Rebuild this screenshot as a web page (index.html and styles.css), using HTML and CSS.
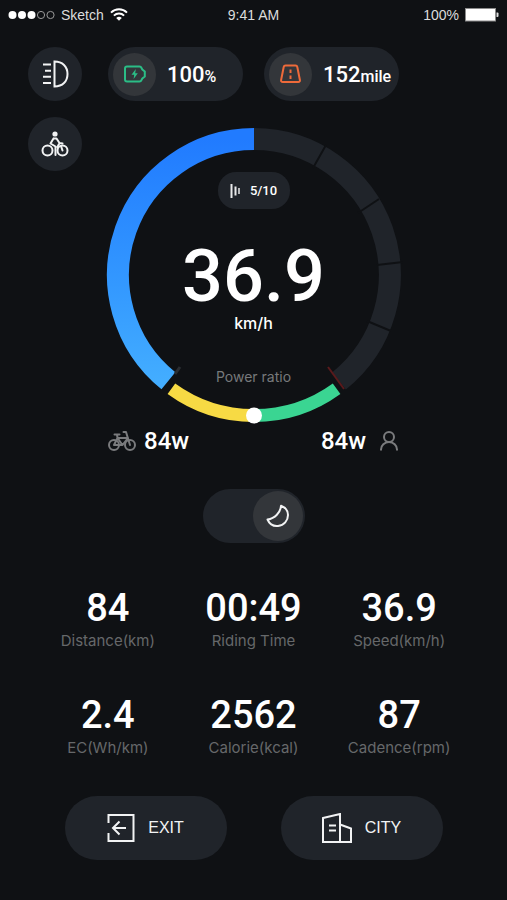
FILE: index.html
```html
<!DOCTYPE html>
<html lang="en">
<head>
    <meta charset="UTF-8">
    <meta name="viewport" content="width=device-width, initial-scale=1.0">
    <title>Ride</title>
    <link rel="stylesheet" href="styles.css">
</head>
<body>
    <header class="status-bar">
        <div class="carrier">
            <svg width="47" height="10" viewBox="0 0 47 10">
                <g fill="#fff"><circle cx="4.5" cy="5" r="4"/><circle cx="14" cy="5" r="4"/><circle cx="23.5" cy="5" r="4"/></g>
                <g fill="none" stroke="#999" stroke-width="1"><circle cx="33" cy="5" r="3.6"/><circle cx="42.5" cy="5" r="3.6"/></g>
            </svg>
            <span>Sketch</span>
            <svg class="wifi" width="18" height="13" viewBox="0 0 18 13" fill="none" stroke="#fff" stroke-width="2">
                <path d="M1 4.6a11.5 11.5 0 0 1 16 0M3.9 7.6a7.4 7.4 0 0 1 10.2 0"/>
                <path d="M9 12.8 6.2 10a4 4 0 0 1 5.6 0z" fill="#fff" stroke="none"/>
            </svg>
        </div>
        <span>9:41 AM</span>
        <div class="battery">
            <span>100%</span>
            <svg width="34" height="14" viewBox="0 0 34 14">
                <rect x=".5" y=".5" width="30" height="12.5" fill="#fff" stroke="#8b8b8b"/>
                <path d="M31.5 4.5h1q1 0 1 1v2.500q0 1-1 1h-1z" fill="#ddd"/>
            </svg>
        </div>
    </header>

    <main>
        <section class="dashboard">
            <button class="round-btn light-btn" aria-label="Headlight">
                <svg width="28" height="28" viewBox="0 0 28 28" fill="none" stroke="#f2f3f4" stroke-width="2">
                    <path d="M13.500 1.500v25c8 0 13-5 13-12.500s-5-12.500-13-12.500z"/>
                    <path d="M2 4.500h8M4 10.800h6M2 16.800h8M2 23h8"/>
                </svg>
            </button>

            <div class="pills">
                <div class="pill">
                    <span class="pill-icon">
                        <svg width="24" height="20" viewBox="0 0 24 20" fill="none" stroke="#2bbd86" stroke-width="2" stroke-linejoin="round">
                            <path d="M4 2.500h12.500q1.500 0 2 1.500l.8 1.500 2.500 2v5l-2.500 2-.8 1.500q-.5 1.500-2 1.500H4q-2 0-2-2v-11q0-2 2-2z"/>
                            <path d="M12.800 5 8.500 10.800h2.700L10.600 15l4.200-5.800h-2.600z" fill="#2bbd86" stroke="none"/>
                        </svg>
                    </span>
                    <span class="pill-value">100<small>%</small></span>
                </div>
                <div class="pill">
                    <span class="pill-icon">
                        <svg width="22" height="20" viewBox="0 0 22 20" fill="none" stroke="#ee6a3a" stroke-width="2" stroke-linejoin="round">
                            <path d="M5.500 1.500h10q1.500 0 1.800 1.500l2.600 13q.2 2-1.600 2H2.700q-1.800 0-1.600-2L3.700 3q.3-1.500 1.800-1.500z"/>
                            <path d="M10.500 5.500v3.500M10.500 11.500V15"/>
                        </svg>
                    </span>
                    <span class="pill-value">152<small>mile</small></span>
                </div>
            </div>

            <div class="dial">
                <svg class="ring" viewBox="0 0 294 294" fill="none">
                    <defs>
                        <linearGradient id="blue" x1="0" y1="0" x2="0" y2="1">
                            <stop offset="0" stop-color="#217bff"/>
                            <stop offset=".6" stop-color="#3398ff"/>
                            <stop offset="1" stop-color="#43adff"/>
                        </linearGradient>
                    </defs>
                    <path d="M147 11A136 136 0 0 1 232 253" stroke="#20242a" stroke-width="22"/>
                    <path d="M206 40 219 17M251 85 272 71M270 137 296 134M260 193 284 203" stroke="#0f1114" stroke-width="2"/>
                    <path d="M147 11A136 136 0 0 0 61.400 252.700" stroke="url(#blue)" stroke-width="22"/>
                    <path d="M68 246 73 239" stroke="#2a2d31" stroke-width="3"/>
                    <path d="M221 239 237 261" stroke="#5a1a1c" stroke-width="2"/>
                    <path d="M64.400 260.700A140.500 140.500 0 0 0 147 287.500" stroke="#f7da44" stroke-width="13"/>
                    <path d="M147 287.500A140.500 140.500 0 0 0 229.600 260.700" stroke="#3ad592" stroke-width="13"/>
                    <circle cx="147" cy="287.500" r="8" fill="#fff"/>
                </svg>
                <div class="readout">
                    <div class="level">
                        <svg width="10" height="14" viewBox="0 0 10 14" stroke="#e8e9ea">
                            <path d="M1.500 0v14" stroke-width="2"/>
                            <path d="M5.500 2.500v9" stroke-width="2"/>
                            <path d="M9 4v6" stroke-width="1.500"/>
                        </svg>
                        <span>5/10</span>
                    </div>
                    <div class="speed">36.9</div>
                    <div class="unit">km/h</div>
                    <div class="ratio-label">Power ratio</div>
                </div>
            </div>

            <button class="round-btn ride-btn" aria-label="Riding">
                <svg width="28" height="28" viewBox="0 0 28 28" fill="none" stroke="#f2f3f4" stroke-width="2" stroke-linecap="round" stroke-linejoin="round">
                    <circle cx="6.500" cy="20.500" r="5"/>
                    <circle cx="21.500" cy="20.500" r="5"/>
                    <circle cx="14" cy="4" r="2.600" fill="#f2f3f4" stroke="none"/>
                    <path d="M12.500 8.500 9.500 13.500l5 3v8.500M12.500 8.500h3l3 4.500 3 .5M18.500 13l-2 4M20 16l1.500 4.500"/>
                </svg>
            </button>

            <div class="power">
                <div class="power-item">
                    <svg width="28" height="22" viewBox="0 0 28 22" fill="none" stroke="#7a7b7d" stroke-width="2" stroke-linecap="round" stroke-linejoin="round">
                        <circle cx="6" cy="15" r="5"/>
                        <circle cx="22" cy="15" r="5"/>
                        <path d="M6 15 9.500 8l5 7L20 8M6.500 4.500h5M9 4.500l.5 3.500H20M15.500 2H18l4 13M6 15h8.500"/>
                    </svg>
                    <span class="power-value">84w</span>
                </div>
                <div class="power-item">
                    <span class="power-value">84w</span>
                    <svg width="20" height="22" viewBox="0 0 20 22" fill="none" stroke="#7a7b7d" stroke-width="2">
                        <circle cx="10" cy="7" r="5"/>
                        <path d="M2 20.500v-1c0-4 3.500-7.500 8-7.500s8 3.500 8 7.500v1"/>
                    </svg>
                </div>
            </div>
        </section>

        <label class="switch">
            <input type="checkbox" role="switch" aria-label="Night mode" checked>
            <span class="knob">
                <svg width="24" height="24" viewBox="0 0 24 24" fill="none" stroke="#f2f3f4" stroke-width="2" stroke-linejoin="round">
                    <path d="M15 1.800C14.500 8.500 9 14.500 1.500 15.500c2 4.500 6 7 10.500 6.500 6-.7 10-5.500 10-11 0-4-2.500-7.500-7-9.200z"/>
                </svg>
            </span>
        </label>

        <dl class="stats">
            <div class="stat"><dd>84</dd><dt>Distance(km)</dt></div>
            <div class="stat"><dd>00:49</dd><dt>Riding Time</dt></div>
            <div class="stat"><dd>36.9</dd><dt>Speed(km/h)</dt></div>
            <div class="stat"><dd>2.4</dd><dt>EC(Wh/km)</dt></div>
            <div class="stat"><dd>2562</dd><dt>Calorie(kcal)</dt></div>
            <div class="stat"><dd>87</dd><dt>Cadence(rpm)</dt></div>
        </dl>

        <div class="actions">
            <button class="action-btn">
                <svg width="28" height="30" viewBox="0 0 28 30" fill="none" stroke="#f2f3f4" stroke-width="2">
                    <path d="M1.500 10V2h25v26h-25v-8"/>
                    <path d="M19 15H6.500M12.500 8.500 6 15l6.500 6.500"/>
                </svg>
                EXIT
            </button>
            <button class="action-btn">
                <svg width="30" height="30" viewBox="0 0 30 30" fill="none" stroke="#f2f3f4" stroke-width="2">
                    <path d="M1 5 18 1v28H1z"/>
                    <path d="M18 11.500 29 15.500V29H18M7 12.500h7M7 17.500h7"/>
                </svg>
                CITY
            </button>
        </div>
    </main>
</body>
</html>
```
FILE: styles.css
```css
* {
    box-sizing: border-box;
}
body {
    margin: 0;
    background-color: #0f1114;
    color: #fff;
    font-family: Inter, "Liberation Sans", sans-serif;
}
svg {
    display: block;
    flex: none;
}
button {
    border: none;
    padding: 0;
    background-color: #20242a;
    color: #f2f3f4;
    cursor: pointer;
}

/* status bar */
.status-bar {
    display: grid;
    grid-template-columns: 1fr auto 1fr;
    align-items: center;
    height: 29px;
    padding: 0 8px;
    font: 14px "Liberation Sans", Arial, sans-serif;
    color: #dcdcdc;
}
.carrier,
.battery {
    display: flex;
    align-items: center;
    gap: 6px;
}
.battery {
    justify-content: flex-end;
}

/* dashboard */
.dashboard {
    display: grid;
    grid-template-columns: 54px 1fr 54px;
    column-gap: 26px;
    padding: 18px 28px 0;
}
.round-btn {
    display: flex;
    align-items: center;
    justify-content: center;
    width: 54px;
    height: 54px;
    border-radius: 50%;
}
.pills {
    display: flex;
    justify-content: center;
    gap: 21px;
}
.pill {
    display: flex;
    align-items: center;
    gap: 11px;
    width: 135px;
    height: 54px;
    padding-left: 5px;
    border-radius: 27px;
    background-color: #20242a;
}
.pill-icon {
    display: flex;
    align-items: center;
    justify-content: center;
    width: 43px;
    height: 43px;
    border-radius: 50%;
    background-color: #33363a;
}
.pill-value {
    font: 500 22px Roboto, sans-serif;
}
.pill-value small {
    font-size: 16px;
}
.ride-btn {
    grid-column: 1;
    grid-row: 2;
    margin-top: 16px;
}
.dial {
    display: grid;
    grid-column: 1 / -1;
    grid-row: 2;
    justify-content: center;
    margin-top: 27px;
}
.ring,
.readout {
    grid-area: 1 / 1;
}
.ring {
    width: 294px;
    overflow: visible;
}
.readout {
    display: flex;
    flex-direction: column;
    align-items: center;
    padding-top: 44px;
    line-height: 20px;
}
.level {
    display: flex;
    align-items: center;
    justify-content: center;
    gap: 10px;
    width: 72px;
    height: 37px;
    border-radius: 18px;
    background-color: #20242a;
    font: 500 13px Roboto, sans-serif;
}
.speed {
    margin-top: 32px;
    font: 500 72px/72px Roboto, sans-serif;
}
.unit {
    font-size: 16px;
    font-weight: 500;
}
.ratio-label {
    margin-top: 34px;
    font-size: 14px;
    color: #77797b;
}
.power {
    display: flex;
    grid-column: 2;
    justify-content: space-between;
    margin-top: 5px;
}
.power-item {
    display: flex;
    align-items: center;
    gap: 8px;
}
.power-item + .power-item {
    gap: 13px;
}
.power-value {
    font: 500 24px/28px Roboto, sans-serif;
}

/* night mode switch */
.switch {
    position: relative;
    display: block;
    width: 102px;
    height: 54px;
    margin: 34px auto 0;
    cursor: pointer;
}
.switch input {
    appearance: none;
    width: 100%;
    height: 100%;
    margin: 0;
    border-radius: 27px;
    background-color: #20242a;
}
.knob {
    position: absolute;
    top: 2px;
    left: 2px;
    display: flex;
    align-items: center;
    justify-content: center;
    width: 50px;
    height: 50px;
    border-radius: 50%;
    background-color: #33363a;
}
.switch input:checked + .knob {
    right: 2px;
    left: auto;
}

/* stats */
.stats {
    display: grid;
    grid-template-columns: repeat(3, 1fr);
    row-gap: 41px;
    margin: 43px 0 0;
    padding: 0 35px;
    text-align: center;
}
.stat {
    display: flex;
    flex-direction: column;
}
.stat dd {
    margin: 0;
    font: 500 38px/44px Roboto, sans-serif;
}
.stat dt {
    font-size: 15px;
    line-height: 22px;
    color: #66686a;
}

/* bottom buttons */
.actions {
    display: flex;
    justify-content: center;
    gap: 54px;
    margin-top: 37px;
    padding-bottom: 40px;
}
.action-btn {
    display: flex;
    align-items: center;
    justify-content: center;
    gap: 13px;
    width: 162px;
    height: 64px;
    border-radius: 32px;
    font: 16px "Liberation Sans", Arial, sans-serif;
}
```
